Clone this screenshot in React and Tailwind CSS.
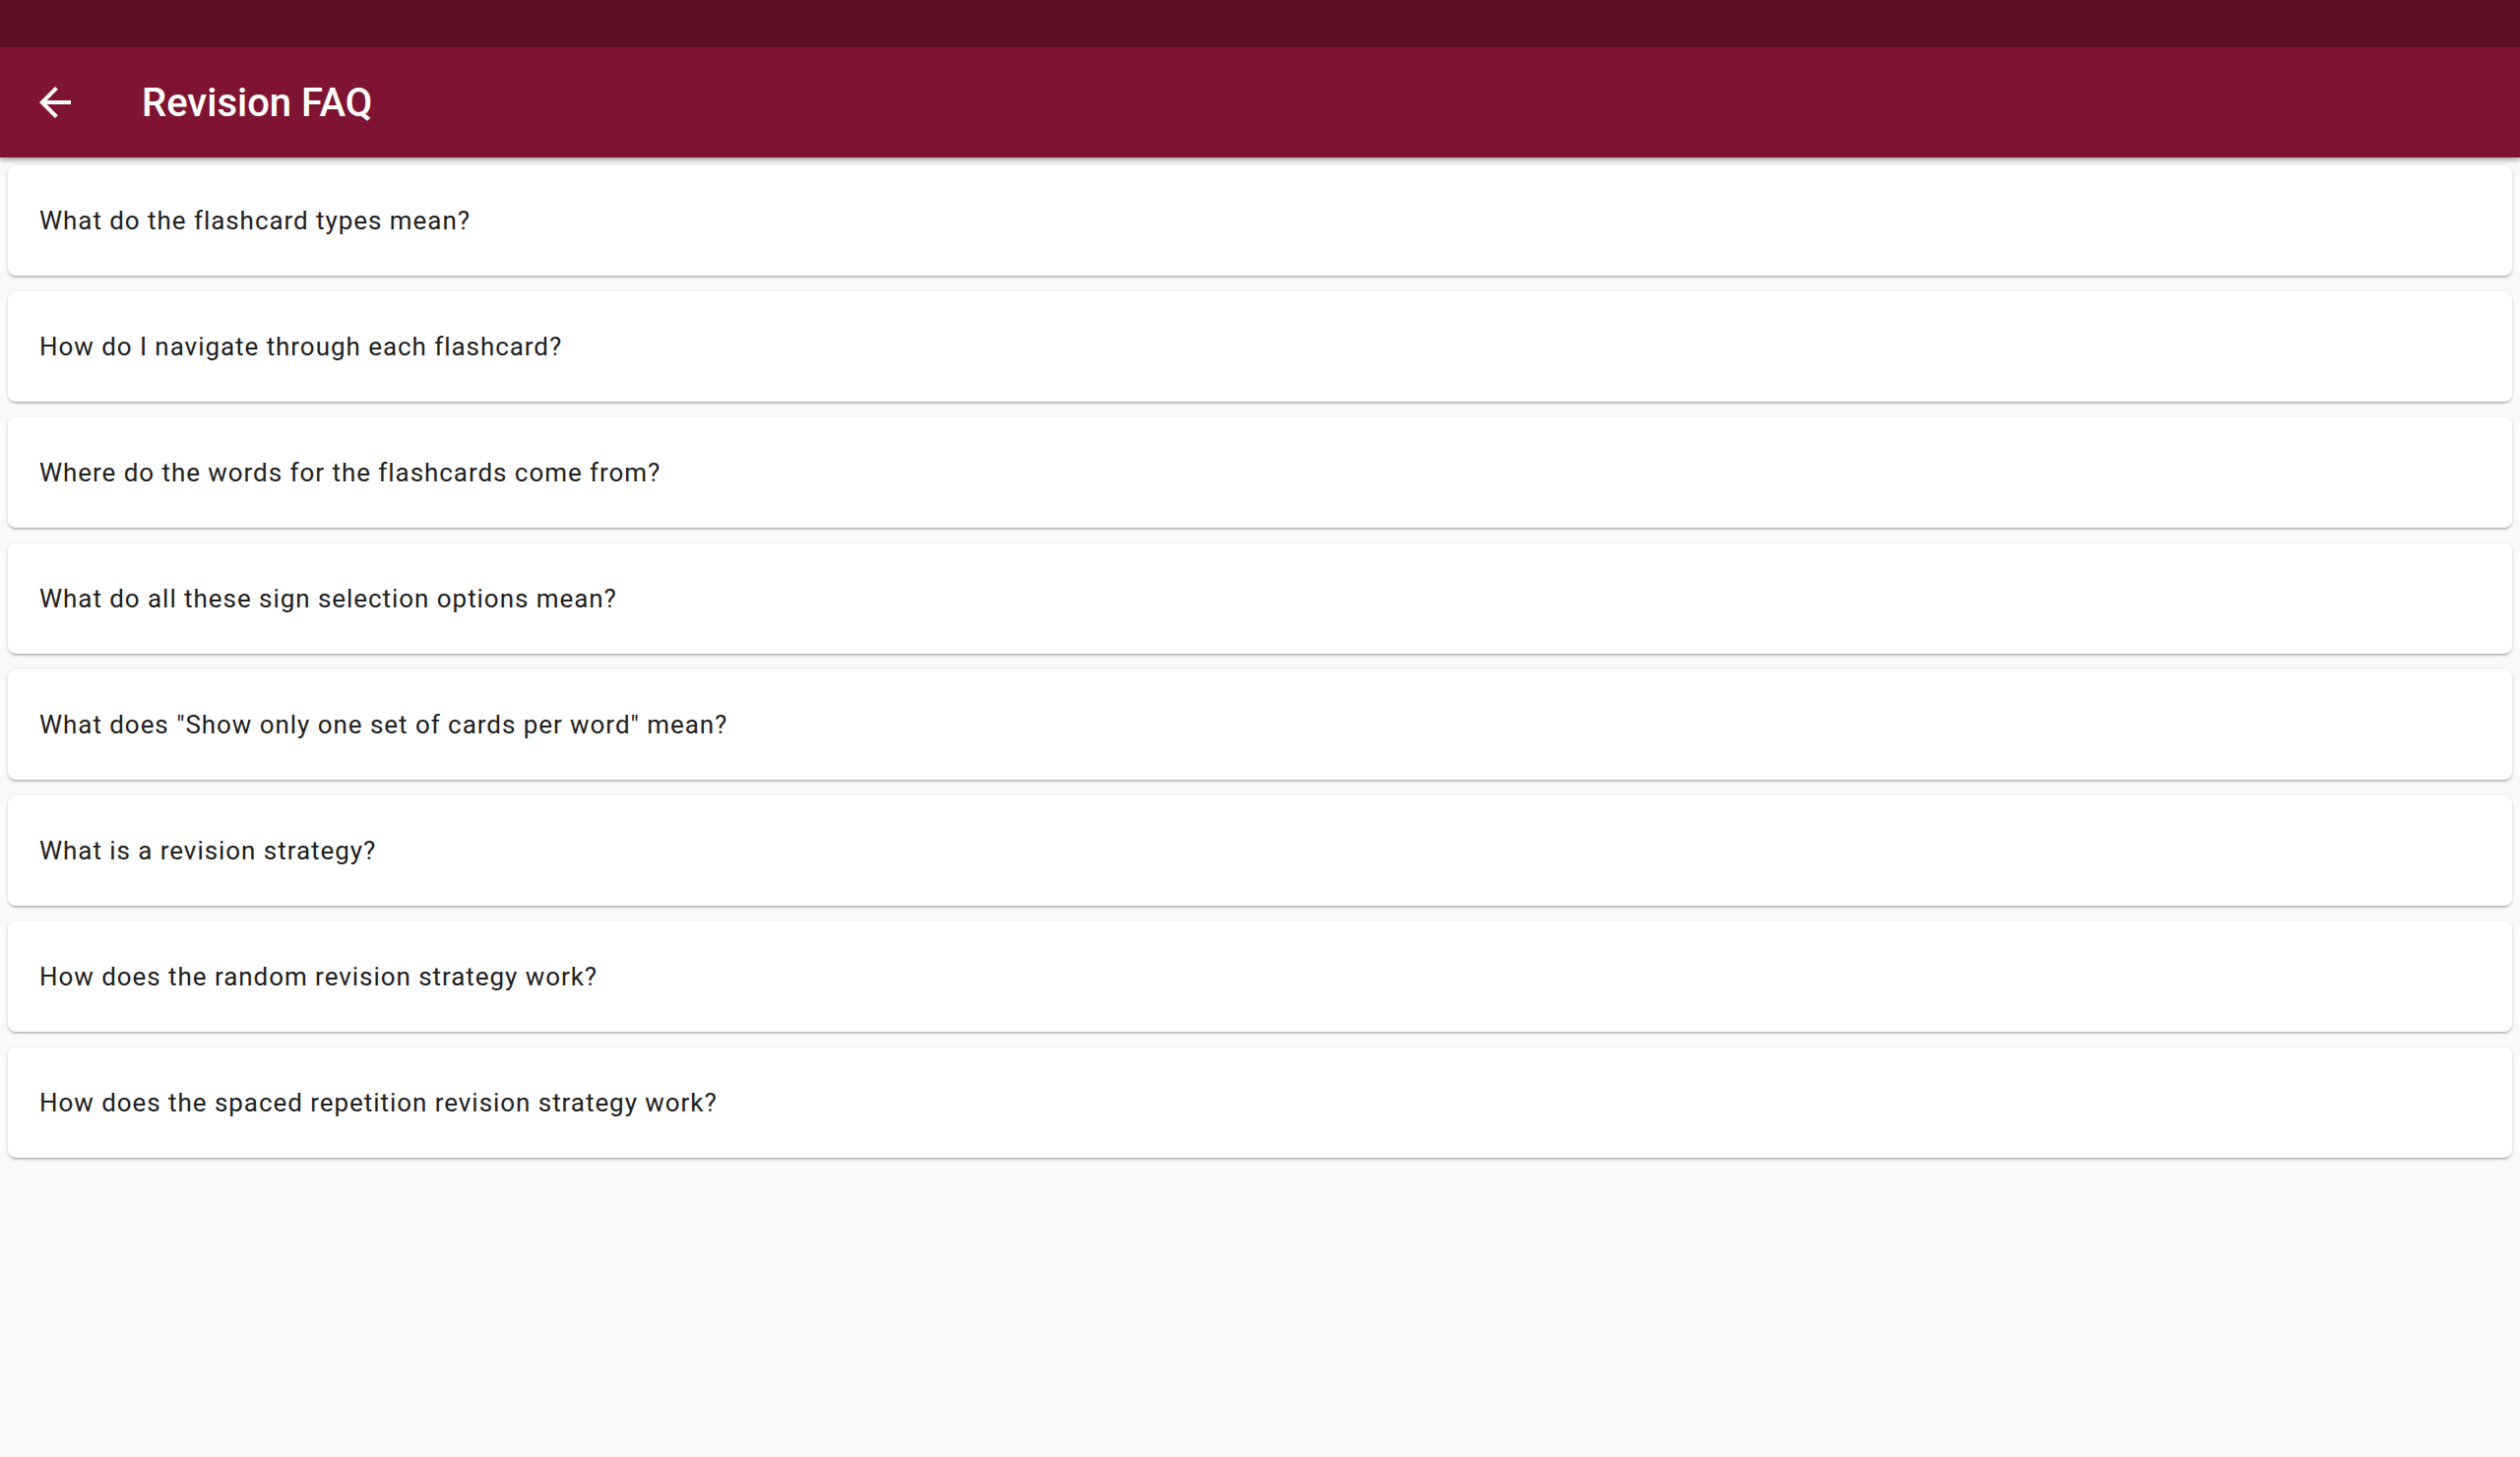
import React from "react";

const questions = [
  "What do the flashcard types mean?",
  "How do I navigate through each flashcard?",
  "Where do the words for the flashcards come from?",
  "What do all these sign selection options mean?",
  'What does "Show only one set of cards per word" mean?',
  "What is a revision strategy?",
  "How does the random revision strategy work?",
  "How does the spaced repetition revision strategy work?",
];

const ArrowBack = (props) => (
  <svg {...props} viewBox="0 0 24 24" fill="currentColor">
    <path d="M20 11H7.83l5.59-5.59L12 4l-8 8 8 8 1.41-1.41L7.83 13H20v-2z" />
  </svg>
);

const FaqCard = ({ text }) => (
  <div className="flex h-[112px] items-center rounded-[8px] bg-white px-[32px] shadow-[0_2px_2px_rgba(0,0,0,0.14),0_3px_1px_-2px_rgba(0,0,0,0.12),0_1px_5px_rgba(0,0,0,0.1)]">
    <p className="text-[26px] tracking-[0.95px] text-[#212121]">{text}</p>
  </div>
);

export default function App() {
  return (
    <div
      className="flex min-h-[1480px] w-full flex-col bg-[#fafafa]"
      style={{ fontFamily: "Roboto, 'Noto Sans', sans-serif" }}
    >
      <div className="h-[48px] bg-[#5e0f25]" />
      <header className="relative z-10 flex h-[112px] items-center bg-[#7f1432] shadow-[0_2px_4px_rgba(0,0,0,0.2),0_4px_5px_rgba(0,0,0,0.14)]">
        <button className="ml-[32px] flex h-[48px] w-[48px] items-center justify-center text-white">
          <ArrowBack className="h-[48px] w-[48px]" />
        </button>
        <h1 className="ml-[64px] pt-[2px] text-[40px] font-medium text-white">Revision FAQ</h1>
      </header>
      <main className="flex flex-col gap-[16px] px-[8px] pt-[8px]">
        {questions.map((q) => (
          <FaqCard key={q} text={q} />
        ))}
      </main>
    </div>
  );
}
